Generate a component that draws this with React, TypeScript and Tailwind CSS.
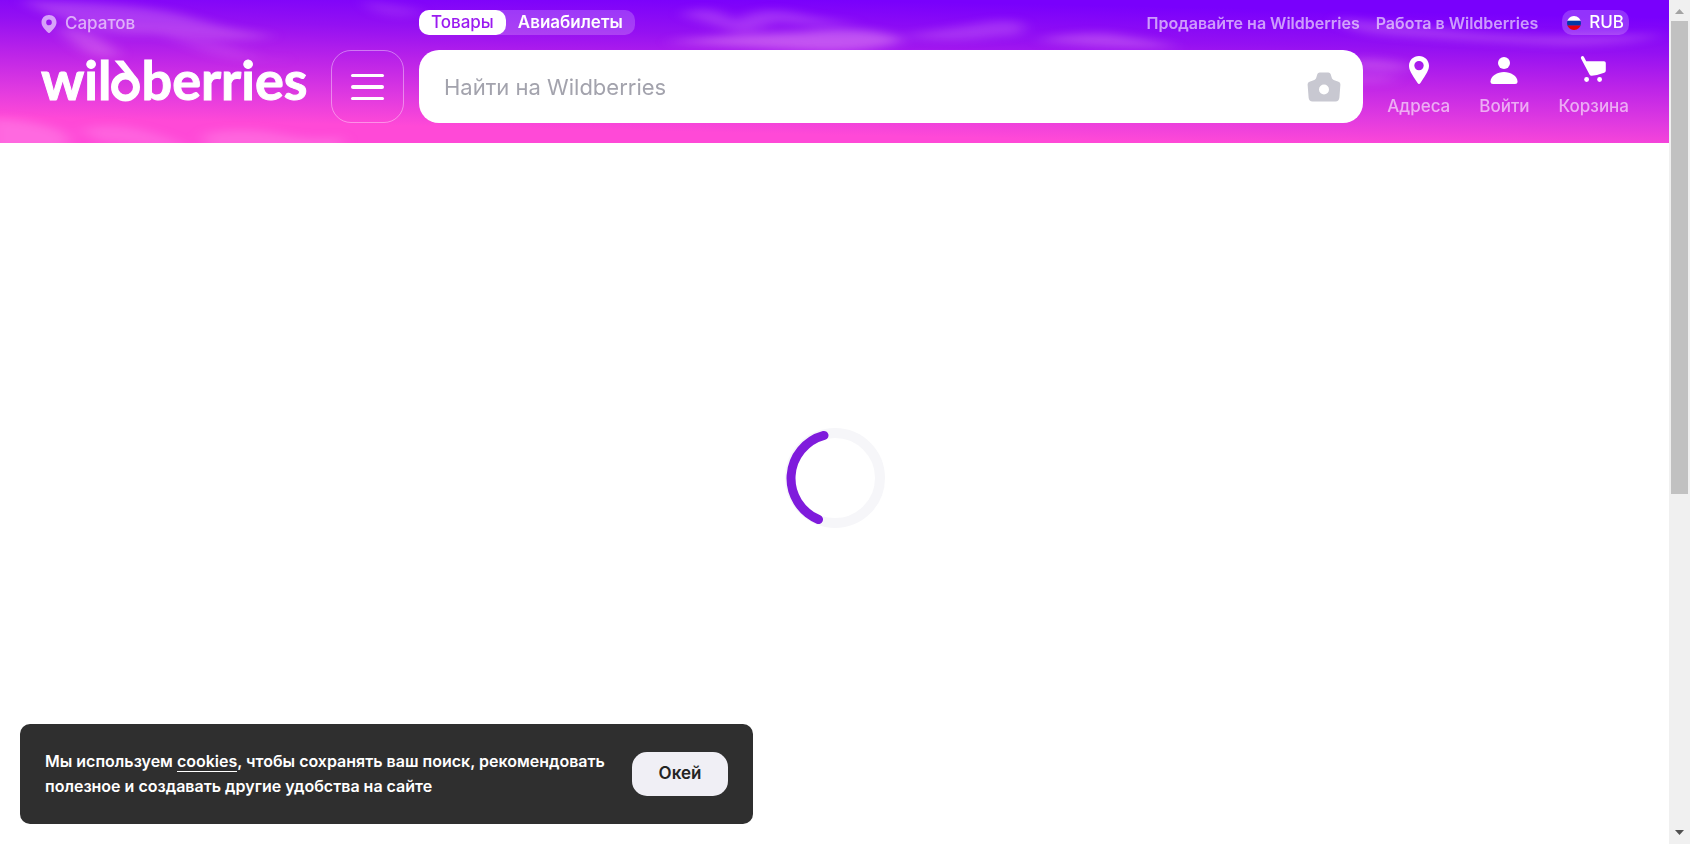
import React from "react";

const clouds = [
  { d: "M20 0 Q90 2 130 6 T200 20 T276 36 Q240 42 205 38 T120 34 Q70 26 20 0Z", o: 0.26 },
  { d: "M55 26 Q85 28 100 38 T120 56 Q95 60 80 48 T55 26Z", o: 0.28 },
  { d: "M160 34 Q200 34 240 50 T290 58 Q240 64 205 52Z", o: 0.14 },
  { d: "M-10 118 Q30 120 54 128 T64 150 L-10 150Z", o: 0.3 },
  { d: "M80 130 Q110 120 150 132 T185 150 L100 142Z", o: 0.24 },
  { d: "M203 134 Q240 126 280 134 T342 136 L340 150 L208 150Z", o: 0.26 },
  { d: "M665 42 Q740 34 800 32 Q870 24 905 40 Q870 54 800 50 T665 42Z", o: 0.4 },
  { d: "M680 14 Q715 2 735 22 Q755 4 800 14 T866 22 Q820 28 775 22 Q745 38 725 28Z", o: 0.24 },
  { d: "M900 36 Q950 28 975 24 Q1000 18 1022 22 Q1030 38 1000 36 Q950 44 900 36Z", o: 0.22 },
  { d: "M1035 40 Q1080 32 1110 34 Q1140 38 1180 47 Q1110 50 1035 40Z", o: 0.3 },
  { d: "M1335 18 Q1400 24 1450 30 T1560 36 T1664 34 Q1620 48 1540 44 T1400 36 T1335 18Z", o: 0.26 },
  { d: "M1350 60 Q1385 56 1415 68 Q1390 74 1350 68Z", o: 0.26 },
  { d: "M1350 76 Q1380 73 1400 79 Q1380 84 1350 82Z", o: 0.22 },
  { d: "M360 0 Q400 4 425 12 Q400 20 375 12Z", o: 0.14 },
];

function Sky() {
  return (
    <svg
      className="absolute inset-0 h-full w-full"
      viewBox="0 0 1669 143"
      preserveAspectRatio="none"
      aria-hidden="true"
    >
      <defs>
        <linearGradient id="sky" gradientUnits="userSpaceOnUse" x1="837" y1="0" x2="834" y2="142">
          <stop offset="0" stopColor="#7900fc" />
          <stop offset="0.25" stopColor="#9410f2" />
          <stop offset="0.5" stopColor="#bc24e8" />
          <stop offset="0.75" stopColor="#e03ae0" />
          <stop offset="0.95" stopColor="#ff49d7" />
        </linearGradient>
        <filter id="soft" filterUnits="userSpaceOnUse" x="-40" y="-40" width="1749" height="223">
          <feGaussianBlur stdDeviation="8 4" />
        </filter>
      </defs>
      <rect width="1669" height="143" fill="url(#sky)" />
      <g fill="#ffb4f5" filter="url(#soft)">
        {clouds.map((c) => (
          <path key={c.d} d={c.d} opacity={c.o} />
        ))}
      </g>
    </svg>
  );
}

function PinIcon({ className }: { className: string }) {
  return (
    <svg className={className} viewBox="0 0 20 28" fill="currentColor" aria-hidden="true">
      <path
        fillRule="evenodd"
        d="M10 0C4.300 0 0 4.300 0 9.800 0 14 2.400 17.600 8.600 27.100 9.300 28.300 10.700 28.300 11.400 27.100 17.600 17.600 20 14 20 9.800 20 4.300 15.700 0 10 0ZM10 14.300A4.700 4.700 0 1 1 10 4.900 4.700 4.700 0 0 1 10 14.300Z"
      />
    </svg>
  );
}

function SmallPinIcon() {
  return (
    <svg className="h-[18px] w-4" viewBox="0 0 16 18" fill="currentColor" aria-hidden="true">
      <path
        fillRule="evenodd"
        d="M8 0C3.500 0 .5 3.200.5 7.200.5 11 3.300 14 7.200 17.700Q8 18.300 8.800 17.700C12.700 14 15.500 11 15.500 7.200 15.500 3.200 12.500 0 8 0ZM8 10.200A2.800 2.800 0 1 1 8 4.600 2.800 2.800 0 0 1 8 10.200Z"
      />
    </svg>
  );
}

function UserIcon() {
  return (
    <svg className="h-7 w-7" viewBox="0 0 28 28" fill="currentColor" aria-hidden="true">
      <circle cx="14" cy="7" r="6" />
      <path d="M14 16C20.500 16 27.500 20 27.500 25.500Q27.500 28 25 28H3Q.5 28 .5 25.500C.5 20 7.500 16 14 16Z" />
    </svg>
  );
}

function CartIcon() {
  return (
    <svg className="h-7 w-7" viewBox="0 0 28 28" fill="currentColor" aria-hidden="true">
      <path d="M1.900.2Q3.300-.3 4.100 1.200L6.200 5.200H24Q25.800 5.200 25.800 7V14.500Q25.800 16.200 24.200 16.800 17.500 19.400 11.800 19.700 10.200 19.800 9.500 18.400L1 2.400Q.5.800 1.900.2Z" />
      <circle cx="6.600" cy="23.500" r="2.400" />
      <circle cx="19.600" cy="23.500" r="2.400" />
    </svg>
  );
}

function CameraIcon() {
  return (
    <svg className="h-[30px] w-[34px]" viewBox="0 0 34 30" fill="#c8c8d1" aria-hidden="true">
      <path
        fillRule="evenodd"
        d="M12.600 .5H21.400Q23 .5 23.600 2L25 6.500Q26 8 28 8.600L31.500 9.800Q33.500 10.600 33.400 12.600L32.400 25.500Q32 29.500 28.500 29.500H5.500Q2 29.500 1.600 25.500L.6 12.600Q.5 10.600 2.500 9.800L6 8.600Q8 8 9 6.500L10.400 2Q11 .5 12.600 .5ZM17 12.500A5 5 0 1 0 17 22.500 5 5 0 0 0 17 12.500Z"
      />
    </svg>
  );
}

function FlagIcon() {
  return (
    <svg className="h-[14px] w-[14px]" viewBox="0 0 14 14" aria-hidden="true">
      <clipPath id="disc">
        <circle cx="7" cy="7" r="7" />
      </clipPath>
      <g clipPath="url(#disc)">
        <rect width="14" height="5" fill="#fff" />
        <rect y="4.700" width="14" height="5" fill="#0039a6" />
        <rect y="9.500" width="14" height="5" fill="#e3000b" />
      </g>
    </svg>
  );
}

function Logo() {
  return (
    <a
      href="#"
      aria-label="wildberries"
      className="flex h-[60px] items-center font-['Lato',sans-serif] text-[54px] leading-[60px] font-bold text-white [-webkit-text-stroke:1px_white]"
    >
      <span>wil</span>
      <svg className="h-[60px] w-[30px]" viewBox="0 0 30 60" fill="none" stroke="#fff" aria-hidden="true">
        <circle cx="14.500" cy="37" r="11" strokeWidth="7" />
        <path d="M3.500 10.500H12.500L27.500 30L21 31Z" fill="#fff" stroke="none" />
      </svg>
      <span>berries</span>
    </a>
  );
}

const actions = [
  { label: "Адреса", icon: <PinIcon className="h-7 w-5" /> },
  { label: "Войти", icon: <UserIcon /> },
  { label: "Корзина", icon: <CartIcon /> },
];

function Header() {
  return (
    <header className="relative pt-[10px] pr-10 pb-5 pl-[41px]">
      <Sky />
      <div className="relative flex h-[25px] items-center text-[17px] leading-[25px] font-medium text-white/60">
        <a href="#" className="flex w-[378px] shrink-0 items-center gap-2 pt-[2px]">
          <SmallPinIcon />
          Саратов
        </a>
        <nav className="flex rounded-[10px] bg-white/20">
          <a href="#" className="rounded-[10px] bg-white px-3 text-[#9a1af0]">
            Товары
          </a>
          <a href="#" className="px-3 font-semibold text-white">
            Авиабилеты
          </a>
        </nav>
        <nav className="ml-auto flex items-center gap-4 text-[16px]">
          <a href="#" className="pt-[2px] font-semibold">Продавайте на Wildberries</a>
          <a href="#" className="pt-[2px] font-semibold">Работа в Wildberries</a>
          <button
            type="button"
            className="ml-2 flex h-[25px] items-center gap-2 rounded-[10px] bg-white/20 px-[5px] text-[17px] text-white"
          >
            <FlagIcon />
            RUB
          </button>
        </nav>
      </div>
      <div className="relative mt-[15px] flex h-[73px]">
        <div className="flex w-[378px] shrink-0 justify-between pr-[15px]">
          <Logo />
          <button
            type="button"
            aria-label="Меню"
            className="flex h-[73px] w-[73px] flex-col items-center justify-center gap-[8px] rounded-[20px] border border-white/40"
          >
            <span className="h-[3px] w-[33px] rounded-full bg-white" />
            <span className="h-[4px] w-[33px] rounded-full bg-white" />
            <span className="h-[3px] w-[33px] rounded-full bg-white" />
          </button>
        </div>
        <form className="flex min-w-0 flex-1 items-center rounded-[20px] bg-white pr-[22px] pl-[25px]">
          <input
            type="text"
            aria-label="Поиск"
            placeholder="Найти на Wildberries"
            className="h-full min-w-0 flex-1 bg-transparent text-[22px] text-[#242424] outline-none placeholder:text-[#a3a3ad]"
          />
          <button type="button" aria-label="Поиск по фото">
            <CameraIcon />
          </button>
        </form>
        <nav className="flex shrink-0 gap-[29px] pt-[6px] pl-6">
          {actions.map((a) => (
            <a
              key={a.label}
              href="#"
              className="flex flex-col items-center gap-[10px] text-[17px] leading-[25px] font-medium text-white"
            >
              {a.icon}
              <span className="text-white/60">{a.label}</span>
            </a>
          ))}
        </nav>
      </div>
    </header>
  );
}

function Spinner() {
  return (
    <svg className="h-[100px] w-[100px]" viewBox="0 0 100 100" fill="none" role="status" aria-label="Загрузка">
      <circle cx="50" cy="50" r="45" stroke="#f6f6f9" strokeWidth="10" />
      <path d="M39 7.400A44.500 44.500 0 0 0 33.500 91.500" stroke="#7f1bdc" strokeWidth="9" strokeLinecap="round" />
    </svg>
  );
}

function CookieNotice() {
  return (
    <section className="fixed bottom-5 left-5 flex w-full max-w-[733px] items-center justify-between rounded-[10px] bg-[#2f2f2f] p-[25px]">
      <p className="text-[16px] leading-[25px] font-semibold text-white">
        Мы используем{" "}
        <a href="#" className="border-b border-white">
          cookies
        </a>
        , чтобы сохранять ваш поиск, рекомендовать
        <br />
        полезное и создавать другие удобства на сайте
      </p>
      <button
        type="button"
        className="h-[44px] w-24 shrink-0 rounded-[15px] bg-[#f0eff5] text-[17px] font-semibold text-[#242424]"
      >
        Окей
      </button>
    </section>
  );
}

function ScrollTrack() {
  return (
    <aside className="flex w-[21px] shrink-0 flex-col items-center bg-[#f0f0f0]" aria-hidden="true">
      <svg className="h-[21px] w-[21px]" viewBox="0 0 21 21">
        <path d="M6 14L10.500 9L15 14Z" fill="#a3a3a3" />
      </svg>
      <div className="flex w-full flex-1 flex-col px-[2px]">
        <div className="h-[59%] bg-[#c1c1c1]" />
      </div>
      <svg className="h-[21px] w-[21px]" viewBox="0 0 21 21">
        <path d="M6 7L10.500 12L15 7Z" fill="#505050" />
      </svg>
    </aside>
  );
}

export default function App() {
  return (
    <div className="flex h-screen bg-white font-['Inter',sans-serif]">
      <div className="flex min-w-0 flex-1 flex-col">
        <Header />
        <main className="flex flex-1 items-center justify-center pb-[31px]">
          <Spinner />
        </main>
      </div>
      <ScrollTrack />
      <CookieNotice />
    </div>
  );
}
